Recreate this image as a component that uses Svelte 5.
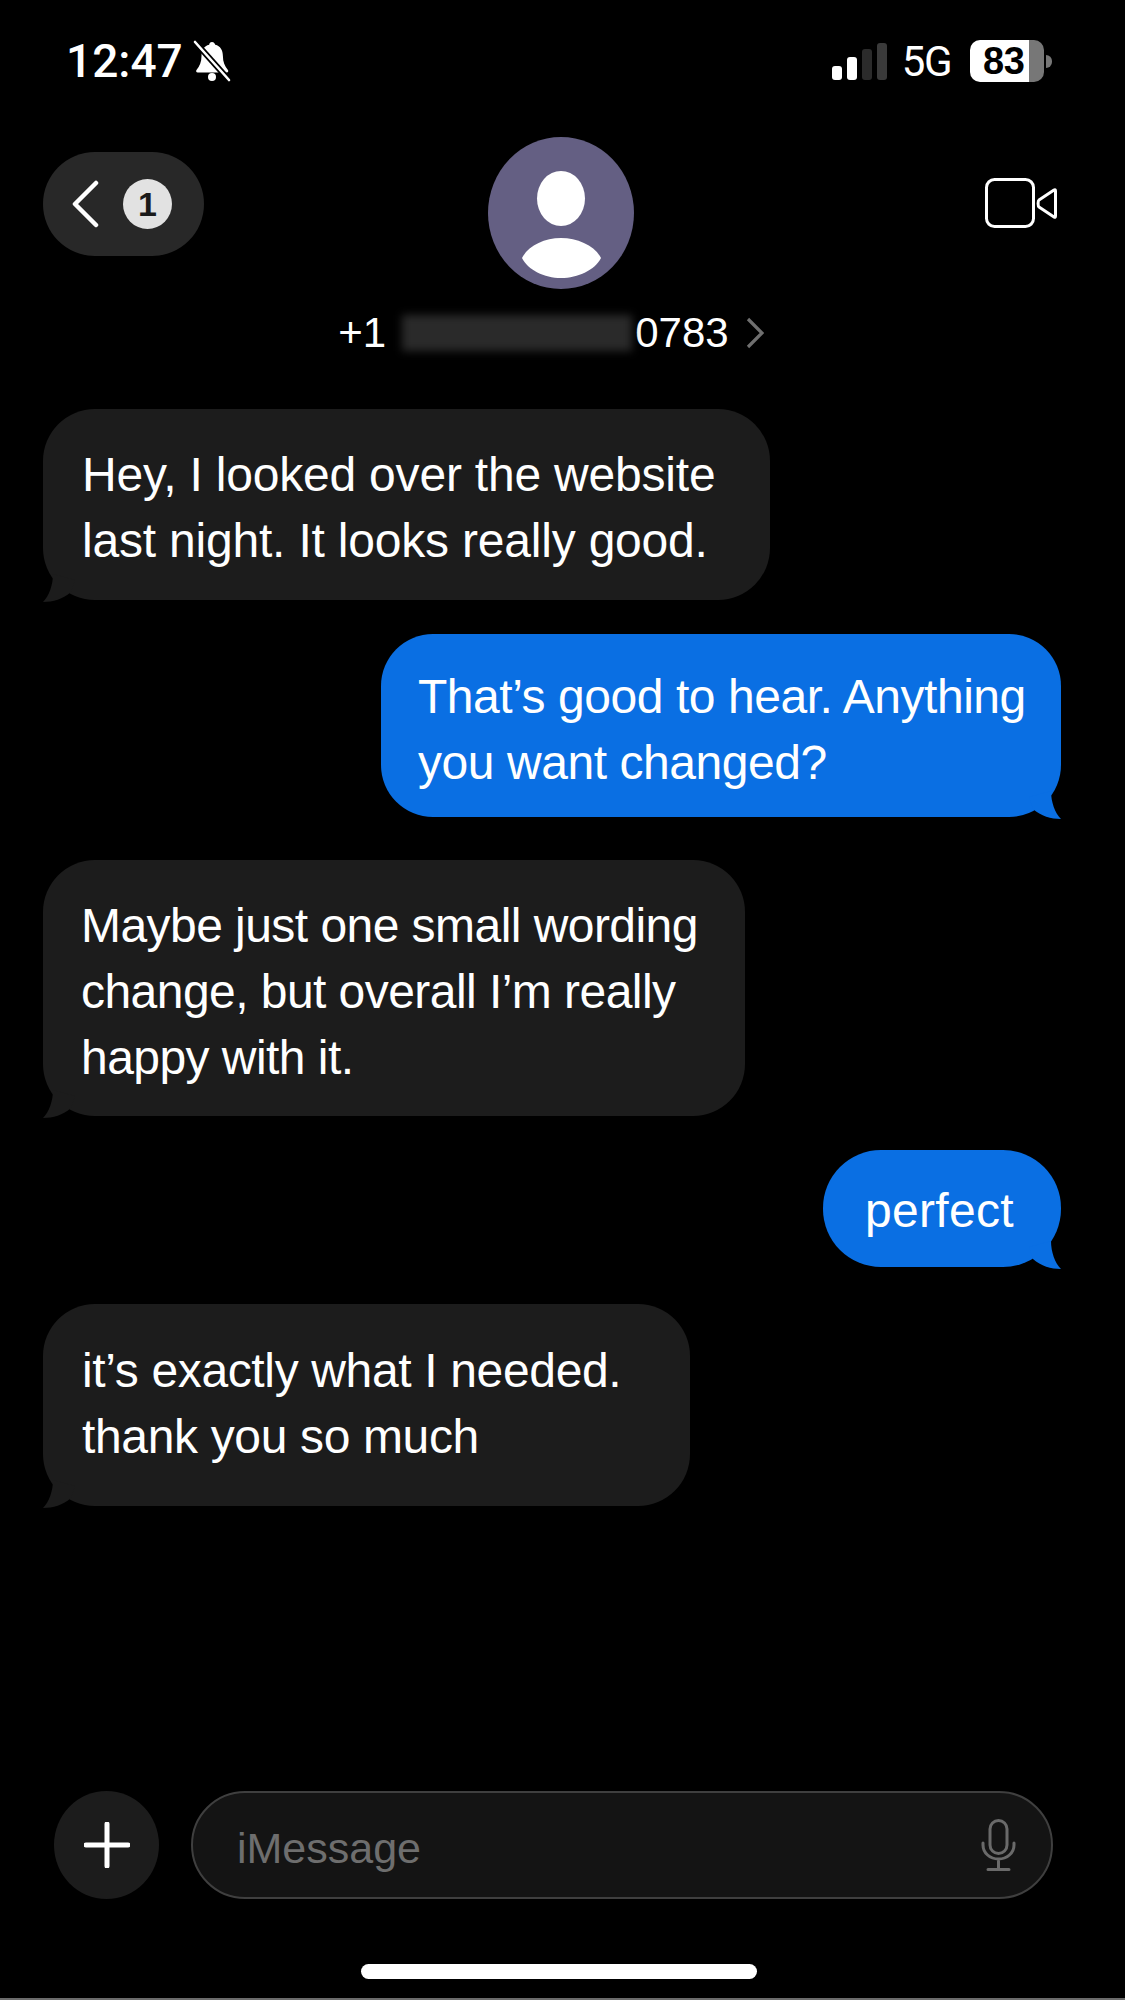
<script lang="ts">
  const messages = [
    { id: 1, side: 'in', lines: ['Hey, I looked over the website', 'last night. It looks really good.'] },
    { id: 2, side: 'out', lines: ['That’s good to hear. Anything', 'you want changed?'] },
    { id: 3, side: 'in', lines: ['Maybe just one small wording', 'change, but overall I’m really', 'happy with it.'] },
    { id: 4, side: 'out', lines: ['perfect'] },
    { id: 5, side: 'in', lines: ['it’s exactly what I needed.', 'thank you so much'] }
  ];
</script>

<div class="screen">
  <div class="status">
    <div class="status-left">
      <span class="time">12:47</span>
      <svg class="bell" viewBox="0 0 38 42" width="38" height="42" aria-hidden="true">
        <path d="M19 2c-1.600 0-2.800 1.200-2.800 2.800C11 6 8.500 10.500 8.500 16c0 6-1.800 10-5 14-.8 1-.2 2.500 1.200 2.500h29c1.400 0 2-1.500 1.200-2.500-3.200-4-5-8-5-14 0-5.500-2.500-10-7.700-11.200C21.800 3.200 20.600 2 19 2z" fill="#fff" />
        <circle cx="19" cy="37" r="4" fill="#fff" />
        <path d="M2 2l34 38" stroke="#000" stroke-width="6" />
        <path d="M2 2l34 38" stroke="#fff" stroke-width="2.600" stroke-linecap="round" />
      </svg>
    </div>
    <div class="status-right">
      <div class="signal">
        <i class="on s1"></i><i class="on s2"></i><i class="s3"></i><i class="s4"></i>
      </div>
      <span class="net">5G</span>
      <div class="battery">
        <span class="level">83</span>
      </div>
      <span class="nub"></span>
    </div>
  </div>

  <header class="head">
    <div class="back">
      <svg viewBox="0 0 27 50" width="27" height="50" aria-hidden="true">
        <path d="M24 4L3 25l21 21" fill="none" stroke="#fff" stroke-width="4.500" stroke-linecap="round" stroke-linejoin="round" />
      </svg>
      <span class="count">1</span>
    </div>
    <div class="contact">
      <div class="avatar">
        <svg viewBox="0 0 146 152" width="146" height="152" aria-hidden="true">
          <ellipse cx="73" cy="61.500" rx="24" ry="27.500" fill="#fff" />
          <path d="M34 121C40 109 56 101 73 101s34 8 40 20c-6 12-23 20-40 20s-33-8-39-20z" fill="#fff" />
        </svg>
      </div>
      <div class="number">
        <span>+1</span>
        <span class="blur"></span>
        <span>0783</span>
        <svg viewBox="0 0 18 32" width="18" height="32" aria-hidden="true">
          <path d="M2 2l14 14L2 30" fill="none" stroke="#6f6f6f" stroke-width="3.200" />
        </svg>
      </div>
    </div>
    <svg class="video" viewBox="0 0 72 50" width="72" height="50" aria-hidden="true">
      <rect x="1.500" y="1.500" width="47" height="47" rx="8" fill="none" stroke="#fff" stroke-width="3" />
      <path d="M54 22l15-10c1-.6 1.500-.2 1.500 1v25c0 1.200-.5 1.600-1.500 1L54 29c-1.200-.8-1.200-6.200 0-7z" fill="none" stroke="#fff" stroke-width="3" stroke-linejoin="round" />
    </svg>
  </header>

  <main class="thread">
    {#each messages as m (m.id)}
      <div class="bubble {m.side} m{m.id}">
        {#each m.lines as line}
          <div>{line}</div>
        {/each}
        <svg class="tail" viewBox="0 0 32 32" width="32" height="32" aria-hidden="true">
          <path d="M10 4C10 15 6 26 0 32c10 0 20-3 28-10l4-12z" fill="currentColor" />
        </svg>
      </div>
    {/each}
  </main>

  <footer class="composer">
    <div class="plus">
      <svg viewBox="0 0 46 46" width="46" height="46" aria-hidden="true">
        <path d="M23 2v42M2 23h42" stroke="#fff" stroke-width="5" stroke-linecap="round" />
      </svg>
    </div>
    <div class="field">
      <span class="hint">iMessage</span>
      <svg viewBox="0 0 35 52" width="35" height="52" aria-hidden="true">
        <rect x="9" y="1.500" width="17" height="33" rx="8.500" fill="none" stroke="#6a6a6a" stroke-width="3" />
        <path d="M2 24v2c0 8 7 14 15.500 14S33 34 33 26v-2M17.500 40v9M7 50.500h21" fill="none" stroke="#6a6a6a" stroke-width="3" stroke-linecap="round" />
      </svg>
    </div>
  </footer>

  <div class="home"></div>
</div>

<style>
  :global(body) {
    margin: 0;
    background: #000;
  }

  .screen {
    width: 1125px;
    height: 2000px;
    display: flex;
    flex-direction: column;
    background: #000;
    color: #fff;
    font-family: "Liberation Sans", Arial, sans-serif;
    overflow: hidden;
    box-sizing: border-box;
    border-bottom: 2px solid #6b6b6b;
  }

  .status {
    display: flex;
    justify-content: space-between;
    align-items: center;
    height: 46px;
    margin-top: 38px;
    padding: 0 73px 0 66px;
  }

  .status-left {
    display: flex;
    align-items: center;
    gap: 10px;
  }

  .time {
    font-family: Roboto, sans-serif;
    font-size: 46px;
    font-weight: 500;
  }

  .status-right {
    display: flex;
    align-items: center;
  }

  .signal {
    display: flex;
    align-items: flex-end;
    gap: 5px;
    height: 37px;
    margin-right: 15px;
  }

  .signal i {
    width: 10px;
    border-radius: 3px;
    background: #2b2b2b;
  }

  .signal i.on {
    background: #fff;
  }

  .s1 { height: 14px; }
  .s2 { height: 23px; }
  .s3 { height: 31px; }
  .s4 { height: 37px; background: #3a3a3a !important; }

  .net {
    font-family: Roboto, sans-serif;
    font-size: 42px;
    letter-spacing: -1.500px;
    margin-right: 19px;
  }

  .battery {
    width: 74px;
    height: 42px;
    border-radius: 10px;
    background: linear-gradient(90deg, #fff 0 80%, #777 80% 100%);
    display: flex;
    align-items: center;
    padding-left: 13px;
    box-sizing: border-box;
  }

  .level {
    color: #000;
    font-size: 38px;
    font-weight: 700;
    letter-spacing: -0.5px;
  }

  .nub {
    width: 6px;
    height: 13px;
    margin-left: 2px;
    border-radius: 0 6px 6px 0;
    background: #777;
  }

  .head {
    display: flex;
    justify-content: space-between;
    align-items: flex-start;
    height: 272px;
    margin-top: 53px;
    padding: 0 68px 0 43px;
    position: relative;
  }

  .back {
    display: flex;
    align-items: center;
    gap: 24px;
    width: 161px;
    height: 104px;
    margin-top: 15px;
    padding-left: 29px;
    box-sizing: border-box;
    border-radius: 52px;
    background: #282828;
  }

  .count {
    width: 49px;
    height: 50px;
    border-radius: 50%;
    background: #e2e2e2;
    color: #1a1a1a;
    font-size: 34px;
    font-weight: 700;
    display: flex;
    align-items: center;
    justify-content: center;
  }

  .contact {
    position: absolute;
    left: 0;
    right: 3px;
    top: 0;
    display: flex;
    flex-direction: column;
    align-items: center;
  }

  .avatar {
    width: 146px;
    height: 152px;
    border-radius: 50%;
    background: #645f83;
  }

  .number {
    display: flex;
    align-items: center;
    margin-top: 23px;
    padding-right: 20px;
    height: 42px;
    font-size: 42px;
  }

  .blur {
    width: 230px;
    height: 36px;
    margin: 0 3px 0 16px;
    background: #2a2a2a;
    filter: blur(4px);
  }

  .number svg {
    margin-left: 17px;
  }

  .video {
    margin-top: 41px;
  }

  .thread {
    flex: 1;
    display: flex;
    flex-direction: column;
    padding: 0 64px 0 43px;
  }

  .bubble {
    position: relative;
    box-sizing: border-box;
    border-radius: 52px;
    font-size: 48px;
    line-height: 66px;
    white-space: nowrap;
    align-self: flex-start;
  }

  .bubble.in {
    background: #1c1c1c;
  }

  .bubble.out {
    align-self: flex-end;
    background: #0a6fe3;
  }

  .m1 { width: 727px; height: 191px; padding: 33px 0 0 39px; letter-spacing: -0.2px; }
  .m2 { width: 680px; height: 183px; padding: 30px 0 0 37px; margin-top: 34px; letter-spacing: -0.45px; }
  .m3 { width: 702px; height: 256px; padding: 33px 0 0 38px; margin-top: 43px; letter-spacing: -0.55px; }
  .m4 { width: 238px; height: 117px; padding: 28px 0 0 42px; margin-top: 34px; border-radius: 58px; letter-spacing: 0.3px; }
  .m5 { width: 647px; height: 202px; padding: 34px 0 0 39px; margin-top: 37px; letter-spacing: -0.35px; }

  .tail {
    position: absolute;
    bottom: -2px;
    left: 0;
    color: #1c1c1c;
  }

  .bubble.out .tail {
    left: auto;
    right: 0;
    color: #0a6fe3;
    transform: scaleX(-1);
  }

  .composer {
    display: flex;
    align-items: center;
    gap: 32px;
    padding: 0 72px 0 54px;
    margin-bottom: 65px;
  }

  .plus {
    width: 105px;
    height: 108px;
    border-radius: 50%;
    background: #1c1c1c;
    display: flex;
    align-items: center;
    justify-content: center;
  }

  .field {
    flex: 1;
    height: 108px;
    box-sizing: border-box;
    border: 2px solid #3f3f3f;
    border-radius: 54px;
    background: #141414;
    display: flex;
    align-items: center;
    justify-content: space-between;
    padding: 0 35px 0 44px;
  }

  .hint {
    color: #6e6e6e;
    font-size: 43px;
    margin-top: 7px;
  }

  .home {
    width: 396px;
    height: 15px;
    margin: 0 0 19px 361px;
    border-radius: 8px;
    background: #fff;
  }
</style>
